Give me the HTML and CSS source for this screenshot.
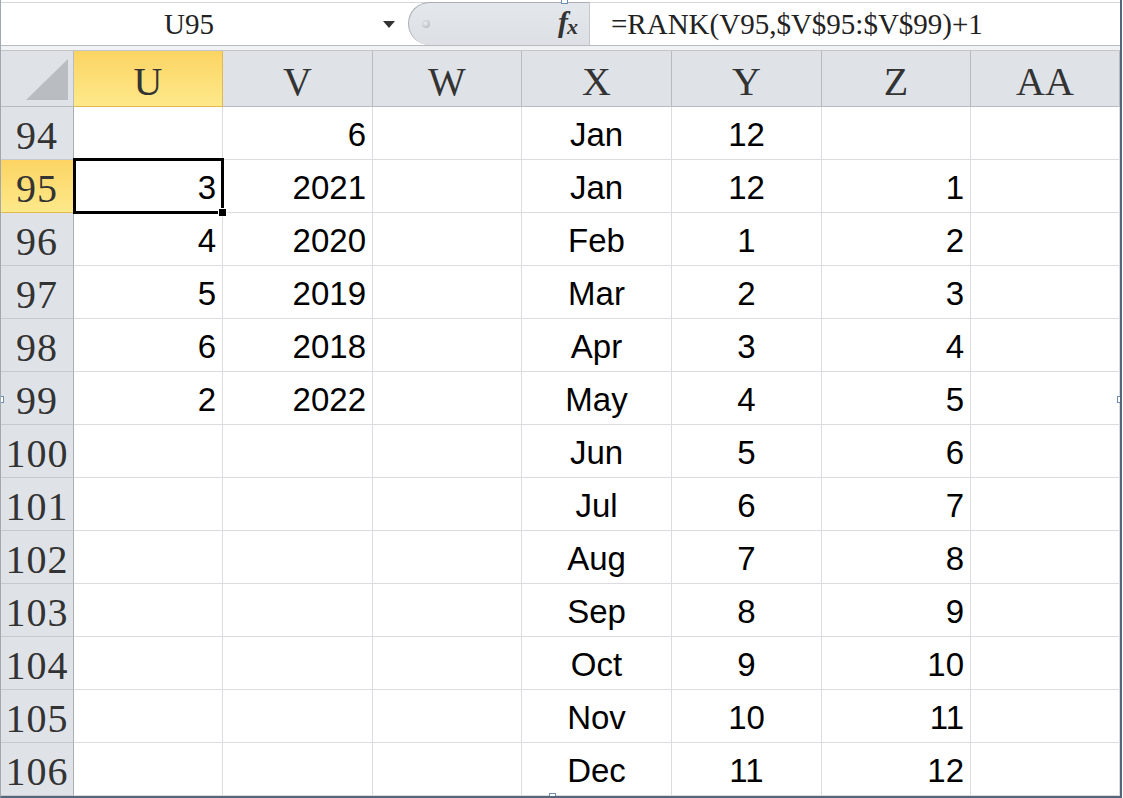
FILE: index.html
```html
<!DOCTYPE html>
<html lang="zh-Hant">
<head>
  <meta charset="UTF-8">
  <title>RANK</title>
  <link rel="stylesheet" href="styles.css">
</head>
<body>
  <div class="frame">
    <div class="top-strip"></div>

    <div class="formula-bar">
      <div class="name-box">
        <span class="name-text">U95</span>
        <span class="drop-arrow"></span>
      </div>
      <div class="fx-box">
        <span class="grip"></span>
        <span class="fx">f<span class="fx-x">x</span></span>
      </div>
      <div class="formula-input">=RANK(V95,$V$95:$V$99)+1</div>
    </div>
    <div class="bar-gap"></div>

    <div class="sheet">
      <!-- column headers -->
      <div class="hdr corner">
        <svg width="72" height="55" viewBox="0 0 72 55"><polygon points="25,49 67,49 67,8" fill="#b9bdc2"/></svg>
      </div>
      <div class="hdr col sel">U</div>
      <div class="hdr col">V</div>
      <div class="hdr col">W</div>
      <div class="hdr col">X</div>
      <div class="hdr col">Y</div>
      <div class="hdr col">Z</div>
      <div class="hdr col">AA</div>

      <div class="hdr row">94</div>
      <div class="cell num"></div><div class="cell num">6</div><div class="cell"></div>
      <div class="cell mid">Jan</div><div class="cell mid">12</div><div class="cell num"></div><div class="cell"></div>

      <div class="hdr row sel">95</div>
      <div class="cell num active">3<span class="fill-handle"></span></div><div class="cell num">2021</div><div class="cell"></div>
      <div class="cell mid">Jan</div><div class="cell mid">12</div><div class="cell num">1</div><div class="cell"></div>

      <div class="hdr row">96</div>
      <div class="cell num">4</div><div class="cell num">2020</div><div class="cell"></div>
      <div class="cell mid">Feb</div><div class="cell mid">1</div><div class="cell num">2</div><div class="cell"></div>

      <div class="hdr row">97</div>
      <div class="cell num">5</div><div class="cell num">2019</div><div class="cell"></div>
      <div class="cell mid">Mar</div><div class="cell mid">2</div><div class="cell num">3</div><div class="cell"></div>

      <div class="hdr row">98</div>
      <div class="cell num">6</div><div class="cell num">2018</div><div class="cell"></div>
      <div class="cell mid">Apr</div><div class="cell mid">3</div><div class="cell num">4</div><div class="cell"></div>

      <div class="hdr row">99</div>
      <div class="cell num">2</div><div class="cell num">2022</div><div class="cell"></div>
      <div class="cell mid">May</div><div class="cell mid">4</div><div class="cell num">5</div><div class="cell"></div>

      <div class="hdr row">100</div>
      <div class="cell num"></div><div class="cell num"></div><div class="cell"></div>
      <div class="cell mid">Jun</div><div class="cell mid">5</div><div class="cell num">6</div><div class="cell"></div>

      <div class="hdr row">101</div>
      <div class="cell num"></div><div class="cell num"></div><div class="cell"></div>
      <div class="cell mid">Jul</div><div class="cell mid">6</div><div class="cell num">7</div><div class="cell"></div>

      <div class="hdr row">102</div>
      <div class="cell num"></div><div class="cell num"></div><div class="cell"></div>
      <div class="cell mid">Aug</div><div class="cell mid">7</div><div class="cell num">8</div><div class="cell"></div>

      <div class="hdr row">103</div>
      <div class="cell num"></div><div class="cell num"></div><div class="cell"></div>
      <div class="cell mid">Sep</div><div class="cell mid">8</div><div class="cell num">9</div><div class="cell"></div>

      <div class="hdr row">104</div>
      <div class="cell num"></div><div class="cell num"></div><div class="cell"></div>
      <div class="cell mid">Oct</div><div class="cell mid">9</div><div class="cell num">10</div><div class="cell"></div>

      <div class="hdr row">105</div>
      <div class="cell num"></div><div class="cell num"></div><div class="cell"></div>
      <div class="cell mid">Nov</div><div class="cell mid">10</div><div class="cell num">11</div><div class="cell"></div>

      <div class="hdr row">106</div>
      <div class="cell num"></div><div class="cell num"></div><div class="cell"></div>
      <div class="cell mid">Dec</div><div class="cell mid">11</div><div class="cell num">12</div><div class="cell"></div>
    </div>

    <!-- picture resize handles -->
    <span class="handle h-top"></span>
    <span class="handle h-left"></span>
    <span class="handle h-right"></span>
    <span class="handle h-bottom"></span>
  </div>
</body>
</html>
```

FILE: styles.css
```css
body {
  margin: 0;
  background: #fff;
}
.frame {
  position: relative;
  width: 1122px;
  height: 798px;
  box-sizing: border-box;
  border-left: 1px solid #a3a8ae;
  border-right: 2px solid #55657a;
  border-bottom: 2px solid #55657a;
  overflow: hidden;
}
.top-strip {
  height: 2px;
  background: #fff;
  border-bottom: 1px solid #d3d6da;
}

/* name box + fx + formula text */
.formula-bar {
  display: flex;
  height: 42px;
  border-bottom: 1px solid #b7bbc1;
  font-family: "Liberation Serif", "Times New Roman", serif;
  font-size: 29px;
  color: #222;
}
.name-box {
  width: 407px;
  display: flex;
  align-items: center;
  background: #fff;
}
.name-text {
  flex: 1;
  text-align: center;
  padding-right: 6px;
  font-family: "Liberation Serif", "Times New Roman", serif;
}
.drop-arrow {
  width: 0;
  height: 0;
  border-left: 6px solid transparent;
  border-right: 6px solid transparent;
  border-top: 7px solid #333;
  margin-right: 13px;
}
.fx-box {
  width: 182px;
  margin-top: -1px;
  display: flex;
  align-items: center;
  justify-content: space-between;
  background: linear-gradient(#e4e7eb, #dcdfe4);
  border: 1px solid #a9aeb5;
  border-right: 1px solid #c4c7cc;
  border-bottom: none;
  border-radius: 22px 0 0 22px;
  box-sizing: border-box;
  padding: 0 11px 0 13px;
}
.grip {
  width: 8px;
  height: 8px;
  border-radius: 50%;
  background: radial-gradient(circle at 40% 40%, #eceef1, #a9aeb5);
}
.fx {
  font-family: "Liberation Serif", serif;
  font-style: italic;
  font-weight: bold;
  font-size: 30px;
  color: #333;
  margin-top: -4px;
}
.fx-x {
  font-size: 22px;
  margin-left: -1px;
  position: relative;
  top: 2px;
}
.formula-input {
  flex: 1;
  display: flex;
  align-items: center;
  padding-left: 21px;
  background: #fff;
}
.bar-gap {
  height: 4px;
  background: #f1f2f4;
  border-bottom: 1px solid #c2c6cb;
}

/* worksheet grid */
.sheet {
  display: grid;
  grid-template-columns: 73px 149px 150px 149px 150px 150px 149px 149px;
  grid-template-rows: 56px;
  grid-auto-rows: 53px;
}
.hdr {
  box-sizing: border-box;
  background: #dfe3e8;
  border-right: 1px solid #b7bcc2;
  border-bottom: 1px solid #b7bcc2;
  display: flex;
  align-items: center;
  justify-content: center;
  padding-top: 5px;
  font-family: "Liberation Serif", "Times New Roman", serif;
  font-size: 40px;
  color: #333;
}
.hdr.corner {
  padding: 0;
  align-items: flex-start;
  justify-content: flex-start;
}
.hdr.row {
  border-right-color: #a9aeb5;
  border-bottom-color: #c6cacf;
  letter-spacing: 1px;
}
.hdr.sel {
  background: linear-gradient(#fcd463, #fde98a);
  border-right-color: #e0b94f;
  border-bottom-color: #e0b94f;
}
.cell {
  position: relative;
  box-sizing: border-box;
  border-right: 1px solid #dadcdf;
  border-bottom: 1px solid #dadcdf;
  display: flex;
  align-items: center;
  padding-top: 3px;
  font-family: "Liberation Sans", Arial, sans-serif;
  font-size: 33px;
  color: #000;
}
.cell.num {
  justify-content: flex-end;
  padding-right: 6px;
}
.cell.mid {
  justify-content: center;
}
.cell.active::after {
  content: "";
  position: absolute;
  left: -1px;
  top: -2px;
  right: -2px;
  bottom: -2px;
  border: 3px solid #000;
  pointer-events: none;
}
.fill-handle {
  position: absolute;
  right: -5px;
  bottom: -5px;
  width: 7px;
  height: 7px;
  background: #000;
  border: 1px solid #fff;
  z-index: 2;
}

/* small picture handles on the frame edges */
.handle {
  position: absolute;
  width: 5px;
  height: 5px;
  background: #fff;
  border: 1px solid #6d8fb5;
}
.h-top {
  top: -3px;
  left: 560px;
}
.h-bottom {
  bottom: -4px;
  left: 548px;
}
.h-left {
  top: 396px;
  left: -4px;
}
.h-right {
  top: 396px;
  right: -4px;
}
```
